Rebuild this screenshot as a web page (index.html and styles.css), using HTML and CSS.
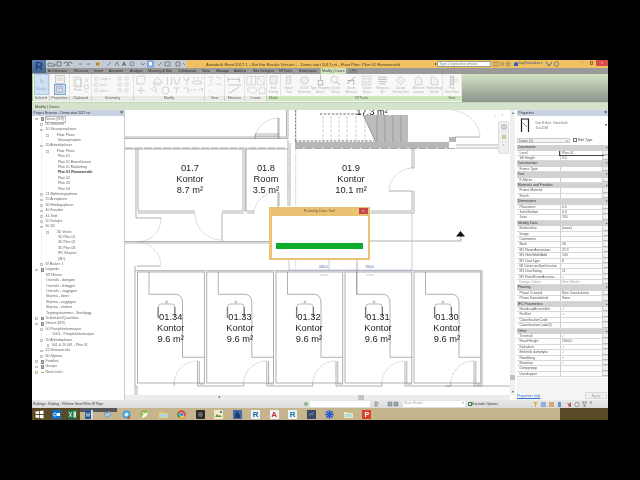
FILE: index.html
```html
<!DOCTYPE html>
<html lang="en">
<head>
<meta charset="utf-8">
<title>Autodesk Revit 2017.1</title>
<link rel="stylesheet" href="styles.css">
</head>
<body>
<div class="screen">
  <header class="titlebar">
    <div class="qat">
      <div class="rlogo">R<span class="rcaret"></span></div>
      <svg class="qat-icons" viewBox="46 60 140 8"><g fill="none" stroke="#666" stroke-width=".8"><path d="M48 63h3l1 1h3v2h-7z"/><rect x="57" y="62" width="4" height="4"/><path d="M64 64a2 2 0 1 1 2 2M72 64a2 2 0 1 0-2 2"/><path d="M79 64h3M87 64h3"/></g><rect x="96" y="62.5" width="3.5" height="3" fill="#b58a1c"/><g fill="none" stroke="#666" stroke-width=".7"><path d="M107 66l4-4M115 66l2-4 2 4"/></g><text x="122" y="66.4" class="qat-a">A</text><g fill="none" stroke="#667" stroke-width=".7"><circle cx="132" cy="64" r="2"/><path d="M141 63l2 2 2-2"/></g><rect x="147" y="60.5" width="7" height="7" fill="#7ca6dc"/><path d="M149 62h3v3.500h-3z" fill="#fff"/><g fill="none" stroke="#666" stroke-width=".7"><path d="M158 66l4-4M165 62h5v4h-5zM176 62h4v4h-4zM183 63l2 2"/></g></svg>
    </div>
    <div class="title">
      <span class="title-text">Autodesk Revit 2017.1 - Not For Resale Version - &nbsp; Demo start 2017.rvt - Floor Plan: Plan 01 Romoversikt</span>
      <div class="search"><span class="search-dot"></span><span class="search-box">Type a keyword or phrase</span></div>
      <svg class="help-icons" viewBox="0 0 18 6"><g fill="none" stroke="#666" stroke-width=".6"><rect x="1" y="1" width="4" height="4"/><circle cx="9" cy="3" r="1.600"/><path d="M15 .8l.8 1.500 1.500.2-1.100 1 .3 1.500-1.500-.7-1.400.7.300-1.500-1.100-1 1.500-.2z"/></g></svg>
      <span class="user"><span class="user-dot"></span>hap@nticad.no ▾</span>
      <svg class="help-icons2" viewBox="0 0 16 6"><path d="M1 1l3 4 3-4" fill="none" stroke="#2f5fa8" stroke-width=".9"/><circle cx="11.500" cy="3" r="2.200" fill="none" stroke="#456" stroke-width=".6"/></svg>
      <div class="winbtns"><span class="wb">–</span><span class="wb wb-max"></span><span class="wb-close">×</span></div>
    </div>
  </header>

  <nav class="tabs">
    <span class="tab t1">Architecture</span><span class="tab t2">Structure</span><span class="tab t3">Insert</span><span class="tab t4">Annotate</span><span class="tab t5">Analyze</span><span class="tab t6">Massing &amp; Site</span><span class="tab t7">Collaborate</span><span class="tab t8">View</span><span class="tab t9">Manage</span><span class="tab t10">Add-Ins</span><span class="tab t11">Site Designer</span><span class="tab t12">NTTools</span><span class="tab t13">Extensions</span><span class="tab-active">Modify | Doors</span><span class="tab-arrow">▾ ▪</span>
  </nav>

  <section class="ribbon">
    <div class="panel p-select"><div class="pbody"><div class="modify-btn"><svg viewBox="0 0 10 10"><path d="M3.500 1l4 4.500H5.500l1.200 2.500-1 .5L4.500 6 3.500 7.200z" fill="#b9c7d9"/></svg><span>Modify</span></div></div><div class="plabel">Select ▾</div></div>
    <div class="panel p-props"><div class="pbody pcol">
      <svg class="propsvg" viewBox="0 0 12 9"><rect x="1.500" y=".5" width="9" height="8" fill="#f0f0f0" stroke="#bbb" stroke-width=".7"/><path d="M3 3h6M3 5h6" stroke="#ccc" stroke-width=".7"/></svg>
      <div class="prop-active"><svg viewBox="0 0 10 10"><rect x="2" y="2" width="6" height="6" fill="#dde" stroke="#999" stroke-width=".7"/><path d="M3.500 4h3" stroke="#999" stroke-width=".7"/></svg></div>
    </div><div class="plabel">Properties</div></div>
    <div class="panel p-clip"><div class="pbody"><svg class="ico" viewBox="0 0 22 22"><g fill="none" stroke="#c8c8c8" stroke-width=".8"><path d="M4 3h7v9H4zM6 5h6v8H6z"/><path d="M16 4l3 4M19 4l-3 4M15 11h4v4h-4zM15 17l4 2"/></g><text x="4" y="17" class="rb-t">Paste</text></svg></div><div class="plabel">Clipboard</div></div>
    <div class="panel p-geom"><div class="pbody"><svg class="ico" viewBox="0 0 42 22"><g fill="none" stroke="#cfcfcf" stroke-width=".8"><path d="M3 3h3v3H3zM3 9h3v3H3zM3 15h3v3H3z"/><path d="M27 3h3v3h-3zM34 3h3v3h-3zM27 9h3v3h-3zM34 9h3v3h-3zM27 15h3v3h-3zM34 15h3v3h-3z"/></g><text x="8" y="6" class="rb-t">Cope ▾</text><text x="8" y="12" class="rb-t">Cut ▾</text><text x="8" y="18" class="rb-t">Join ▾</text></svg></div><div class="plabel">Geometry</div></div>
    <div class="panel p-mod"><div class="pbody"><svg class="ico" viewBox="0 0 71 22"><g fill="none" stroke="#cbcbcb" stroke-width=".9"><path d="M3 2v8h8M5 2h6v6"/><path d="M19 9l5-6 5 6zM21 9v2h6"/><path d="M34 3v8M38 3v8M40 3l3 8M47 3l-3 8M50 3l3 4 3-4-3 8"/><path d="M60 4h2M64 4h2M68 4h2M60 10h8v-3h-8zM60 16h3M65 16h2M68 14l2 3M70 14l-2 3"/><path d="M7 13v7M3.500 16.500h7"/><path d="M17 14l6 5M19 13a4 4 0 0 1 4 4"/><circle cx="32" cy="16.500" r="3.500"/><path d="M40 14h6M43 14v5M50 14h5v5M57 16h2"/></g></svg></div><div class="plabel">Modify</div></div>
    <div class="panel p-view"><div class="pbody"><svg class="ico" viewBox="0 0 20 22"><g fill="none" stroke="#ccc" stroke-width=".8"><path d="M4 4a2 2 0 1 1 2 2v2M12 3h3M15 3l2 3"/><path d="M3 12l5-3M11 10h5v2M4 16l3 3"/></g></svg></div><div class="plabel">View</div></div>
    <div class="panel p-meas"><div class="pbody"><svg class="ico" viewBox="0 0 20 22"><g fill="none" stroke="#bbb" stroke-width=".9"><path d="M3 3v5M3 5h12M15 3v5M3 11h14"/><path d="M4 20l11-7"/></g></svg></div><div class="plabel">Measure</div></div>
    <div class="panel p-create"><div class="pbody"><svg class="ico" viewBox="0 0 22 22"><g fill="none" stroke="#cdcdcd" stroke-width=".8"><path d="M2 2h9v9H2zM6.500 2v9M13 2h7v9h-7zM13 2l7 9"/><path d="M3 14h8l2 3-4 3-6-2zM15 14h6v6h-6z"/></g></svg></div><div class="plabel">Create</div></div>
    <div class="panel p-mode"><div class="pbody"><div class="rb"><svg viewBox="0 0 10 10"><path d="M2 1h6v7H2z" fill="#eee" stroke="#c4c4c4" stroke-width=".7"/></svg><span>Edit<br>Family</span></div></div><div class="plabel plabel-green">Mode</div></div>
    <div class="panel p-nt"><div class="pbody">
      <div class="rb"><svg viewBox="0 0 10 10"><rect x="3" y="1" width="4" height="7" fill="#eee" stroke="#c8c8c8" stroke-width=".7"/></svg><span>Room<br>Tool</span></div>
      <div class="rb"><svg viewBox="0 0 10 10"><circle cx="5" cy="5" r="3.500" fill="#eee" stroke="#c8c8c8" stroke-width=".7"/></svg><span>S &amp; B<br>Elements</span></div>
      <div class="rb"><svg viewBox="0 0 10 10"><path d="M5 0v5M3 5h4v4H3z" fill="none" stroke="#c0c0c0" stroke-width="1"/></svg><span>Type Property<br>Match</span></div>
      <div class="rb"><svg viewBox="0 0 10 10"><circle cx="4" cy="4" r="3" fill="none" stroke="#c8c8c8" stroke-width=".8"/><path d="M6 6l3 3" stroke="#c8c8c8"/></svg><span>Quick<br>Select</span></div>
      <div class="rb"><svg viewBox="0 0 10 10"><path d="M1 8l7-6M1 5h6v4" fill="none" stroke="#b8b8b8" stroke-width="1"/></svg><span>Zoom<br>Element</span></div>
      <div class="rb"><svg viewBox="0 0 10 10"><rect x="1" y="1" width="8" height="8" fill="#f0f6fa" stroke="#c8d0d4" stroke-width=".7"/><rect x="3" y="3" width="4" height="4" fill="none" stroke="#c8d0d4" stroke-width=".6"/></svg><span>Create<br>Mass</span></div>
      <div class="rb"><svg viewBox="0 0 10 10"><path d="M1 2h8M1 4h8M1 6h8M2 8h6" stroke="#bdbdbd" stroke-width=".9"/></svg><span>Measure<br>3D</span></div>
      <div class="rb rb-w"><svg viewBox="0 0 10 10"><path d="M5 1l4 4-4 4-4-4z" fill="#f2f2f2" stroke="#c8c8c8" stroke-width=".7"/></svg><span>Create<br>Section box</span></div>
      <div class="rb"><svg viewBox="0 0 10 10"><path d="M2 4l3-3 3 3v5H2z" fill="#f2f2f2" stroke="#c8c8c8" stroke-width=".7"/></svg><span>Element<br>Lookup</span></div>
      <div class="rb"><svg viewBox="0 0 10 10"><path d="M2 9V2h3l3 3v4z" fill="#f2f2f2" stroke="#c8c8c8" stroke-width=".7"/></svg><span>Remaining<br>Sheet</span></div>
    </div><div class="plabel plabel-green">NTTools</div></div>
    <div class="panel p-host"><div class="pbody"><div class="rb"><svg viewBox="0 0 10 10"><path d="M3 1h3v8H3z" fill="#ddd" stroke="#bbb" stroke-width=".6"/><circle cx="8" cy="5" r="1.500" fill="none" stroke="#bbb" stroke-width=".5"/></svg><span>Pick<br>New Host</span></div></div><div class="plabel plabel-green">Host</div></div>
    <div class="ribbon-fill"></div>
  </section>

  <div class="options">Modify | Doors</div>

  <main class="main">
    <aside class="browser">
      <div class="panel-head"><span>Project Browser - Demo start 2017.rvt</span><span class="x">×</span></div>
      <ul class="tree">
        <li class="l0 open"><i class="exp"></i><i class="ticon"></i><b class="sel">Views (NTI)</b></li>
        <li class="l1"><i class="exp"></i>00 Generelt</li>
        <li class="l1"><i class="exp"></i>10 Situasjonsplaner</li>
        <li class="l2"><i class="exp"></i>Floor Plans</li>
        <li class="l3">Situasjonsplan</li>
        <li class="l1"><i class="exp"></i>20 Arbeidsplaner</li>
        <li class="l2"><i class="exp"></i>Floor Plans</li>
        <li class="l3">Plan 01</li>
        <li class="l3">Plan 01 Brannklasser</li>
        <li class="l3">Plan 01 Målsetting</li>
        <li class="l3 cur">Plan 01 Romoversikt</li>
        <li class="l3">Plan 02</li>
        <li class="l3">Plan 03</li>
        <li class="l3">Plan 04</li>
        <li class="l1"><i class="exp"></i>21 Møbleringsplaner</li>
        <li class="l1"><i class="exp"></i>25 Areaplaner</li>
        <li class="l1"><i class="exp"></i>30 Himlingsplaner</li>
        <li class="l1"><i class="exp"></i>40 Fasader</li>
        <li class="l1"><i class="exp"></i>41 Snitt</li>
        <li class="l1"><i class="exp"></i>50 Detaljer</li>
        <li class="l1"><i class="exp"></i>60 3D</li>
        <li class="l2"><i class="exp"></i>3D Views</li>
        <li class="l3">3D Plan 01</li>
        <li class="l3">3D Plan 02</li>
        <li class="l3">3D Plan 03</li>
        <li class="l3">IFC Eksport</li>
        <li class="l3">{3D}</li>
        <li class="l1"><i class="exp"></i>W Bruker 1</li>
        <li class="l0"><i class="exp"></i><i class="ticon"></i>Legends</li>
        <li class="l1b">NTI Enere</li>
        <li class="l1b">Oversikt - dørtyper</li>
        <li class="l1b">Oversikt - lettvgger</li>
        <li class="l1b">Oversikt - veggtyper</li>
        <li class="l1b">Skjema - dører</li>
        <li class="l1b">Skjema - veggtyper</li>
        <li class="l1b">Skjema - vinduer</li>
        <li class="l1b">Tegningsnummer - Statsbygg</li>
        <li class="l0"><i class="exp"></i><i class="ticon"></i>Schedules/Quantities</li>
        <li class="l0"><i class="exp"></i><i class="ticon"></i>Sheets (NTI)</li>
        <li class="l1"><i class="exp"></i>00 Prosjektinformasjon</li>
        <li class="l2b">0001 - Prosjektinformasjon</li>
        <li class="l1"><i class="exp"></i>20 Arbeidsplaner</li>
        <li class="l2c"><i class="exp"></i>001 &amp; 20 001 - Plan 01</li>
        <li class="l1"><i class="exp"></i>22 Romoversikt</li>
        <li class="l1"><i class="exp"></i>60 Skjema</li>
        <li class="l0"><i class="exp"></i><i class="ticon"></i>Families</li>
        <li class="l0"><i class="exp"></i><i class="ticon"></i>Groups</li>
        <li class="l0"><i class="exp"></i><i class="ticon ticon-link"></i>Revit Links</li>
      </ul>
    </aside>

    <section class="canvas">
      <svg class="plan" viewBox="125 110 385 285">
        <defs>
          <g id="room">
            <rect x="0" y="272" width="66.800" height="111" class="w"/>
            <path d="M11.500 272V294.300H37.500Q45 294.300 45 303V357.300H66.800" class="w"/>
            <path d="M36.800 386V383M60 361V386H106M61.800 361V384H67" class="w"/>
            <path d="M36.800 383A23 23 0 0 1 60 361" class="arc"/>
            <path d="M21 318V306Q21 304 24 304H34Q37 304 37 306V318" class="t"/>
            <path d="M20.500 307V318M37.500 307V316" class="w2"/>
            <circle cx="29" cy="302" r="1" class="t"/>
          </g>
        </defs>
        <g class="walls">
          <path d="M125 138.500H288V110M125 137H286.500V110" class="w"/>
          <path d="M125 148H286" class="wd"/>
          <path d="M125 149H243" class="w"/>
          <path d="M136 149V218H137M138 149V211H195M243 149V211H222M245 149V212M222 213H244M195 213H138M222 213V241" class="w"/>
          <path d="M246 149H288M288 140V206M290 143V206M246 149V211H254M254 213H247M278 192V212M279 192V206" class="w"/>
          <path d="M255 139V134H279V139M255 136H279" class="w"/>
          <path d="M278 118V139M279 118V134" class="w"/>
          <path d="M295.700 110V143" class="blackd"/>
          <path d="M295.700 143V270" class="gd"/>
          <path d="M125 241.500H270M125 243H270" class="w"/>
          <path d="M137 218H161M137 266H161M135 395V266M137 395V386H135" class="w"/>
          <path d="M254 213A24 22 0 0 1 278 192M195 213A27 27 0 0 0 221 240M161 218A24 24 0 0 1 138 242A24 24 0 0 1 161 265M255 139A24 22 0 0 1 278 118M412 168A24 24 0 0 0 389 191M452 110A33 28 0 0 1 480 136" class="arc"/>
          <path d="M295 142H456V137H449V148H295Z" class="band"/>
          <path d="M295 148.500H456" class="wd"/>
          <path d="M455 137H480M456 145H503V148H456" class="w"/>
          <path d="M503 148V145" class="w"/>
          <path d="M363 115H408V142H375Z" class="stair"/>
          <path d="M377 115V142M385 115V142M393 115V142M401 115V142M363 115L376 142" class="w"/>
          <path d="M320 114H364M295 141H374" class="blackd2"/>
          <path d="M323 116V141M331 116V141M339 116V141M347 116V141M356 116V141M365 116V141" class="gd2"/>
          <path d="M412 148V168H414V148M412 191V211H371M414 191V213H370M389 191H412" class="w"/>
          <path d="M370 241H461V236" class="w"/>
          <path d="M456 236.500H465L460.500 231Z" class="tri"/>
          <path d="M135 270.700H482V386H445" class="w"/>
          <path d="M289 255V271M412 213V271M329 260V270M289 270H412" class="dim"/>
          <path d="M357 255V295" class="w"/>
          <path d="M320 275H328M366 275H374" class="dim"/>
        </g>
        <use href="#room" x="137.500"/><use href="#room" x="206.800"/><use href="#room" x="276"/><use href="#room" x="345"/><use href="#room" x="414"/>
        <g class="plan-sm"><text x="319" y="268.200">2460.0</text><text x="365.500" y="268.200">2950.0</text></g>
        <g class="lab">
          <text x="372" y="115">17.3 m²</text>
          <text x="190" y="171">01.7</text><text x="190" y="182">Kontor</text><text x="190" y="192.500">8.7 m²</text>
          <text x="266" y="171">01.8</text><text x="266" y="182">Room</text><text x="266" y="192.500">3.5 m²</text>
          <text x="351" y="171">01.9</text><text x="351" y="182">Kontor</text><text x="351" y="192.500">10.1 m²</text>
          <text x="170.700" y="320">01.34</text><text x="170.700" y="331">Kontor</text><text x="170.700" y="342">9.6 m²</text>
          <text x="240" y="320">01.33</text><text x="240" y="331">Kontor</text><text x="240" y="342">9.6 m²</text>
          <text x="309" y="320">01.32</text><text x="309" y="331">Kontor</text><text x="309" y="342">9.6 m²</text>
          <text x="378" y="320">01.31</text><text x="378" y="331">Kontor</text><text x="378" y="342">9.6 m²</text>
          <text x="447" y="320">01.30</text><text x="447" y="331">Kontor</text><text x="447" y="342">9.6 m²</text>
        </g>
      </svg>

      <div class="dialog">
        <div class="dlg-title"><span>Running Door Tool</span><span class="dlg-close">×</span></div>
        <div class="dlg-body"><div class="progress"></div></div>
      </div>

      <div class="view-ctrl"><span>–</span><span>▫</span><span>×</span></div>
      <div class="navbar"><span class="nav-wheel"></span><span class="nav-zoom"></span><span class="nav-arrow">▾</span></div>

      <div class="vscroll"><span class="arr">▴</span><span class="thumb-v"></span><span class="arr">▾</span></div>
      <div class="hscroll"><span class="arr">◂</span><span class="thumb-h"></span></div>
    </section>

    <aside class="props">
      <div class="panel-head"><span>Properties</span><span class="x">×</span></div>
      <div class="typeprev">
        <svg class="door" viewBox="0 0 12 15"><path d="M1.500 14V1h7v13" fill="#fff" stroke="#222" stroke-width="1.200"/><path d="M3 5l4 4" stroke="#555" stroke-width=".7"/></svg>
        <div class="typename">Dør Enkel, Glasshelt<br>10x21M</div>
        <span class="typearrow">▾</span>
      </div>
      <div class="selrow"><span class="seldrop">Doors (1)<span>▾</span></span><span class="edittype"><i></i>Edit Type</span></div>
      <div class="ptable">
        <div class="ph">Constraints<span>▴</span></div>
        <div class="pr"><span>Level</span><span class="box">Plan 01</span><i></i></div>
        <div class="pr"><span>Sill Height</span><span>0.0</span><i></i></div>
        <div class="ph">Construction<span>▾</span></div>
        <div class="pr"><span>Frame Type</span><span></span><i></i></div>
        <div class="ph">Text<span>▾</span></div>
        <div class="pr"><span>K-Merke</span><span></span><i></i></div>
        <div class="ph">Materials and Finishes<span>▴</span></div>
        <div class="pr"><span>Frame Material</span><span></span><i></i></div>
        <div class="pr"><span>Finish</span><span></span><i></i></div>
        <div class="ph">Dimensions<span>▾</span></div>
        <div class="pr"><span>Plassment</span><span>0.0</span><i></i></div>
        <div class="pr"><span>Joint Bottom</span><span>0.0</span><i></i></div>
        <div class="pr"><span>Joint</span><span>150</span><i></i></div>
        <div class="ph">Identity Data<span>▴</span></div>
        <div class="pr"><span>Beskrivelse</span><span>(none)</span><i></i></div>
        <div class="pr"><span>Image</span><span></span><i></i></div>
        <div class="pr"><span>Comments</span><span></span><i></i></div>
        <div class="pr"><span>Mark</span><span>56</span><i></i></div>
        <div class="pr"><span>M1 RoomAnnotation</span><span>25.9</span><i></i></div>
        <div class="pr"><span>M1 HoleWidthAdd</span><span>100</span><i></i></div>
        <div class="pr"><span>M1 DoorType</span><span>8</span><i></i></div>
        <div class="pr pr-long"><span>M1 DimensionDoorDirection</span><span></span><i></i></div>
        <div class="pr"><span>M1 DoorSwing</span><span>11</span><i></i></div>
        <div class="pr"><span>M1 FromRoomAssocia...</span><span class="ck">✓</span><i></i></div>
        <div class="pr pr-off"><span>Design Option</span><span>Main Model</span><i></i></div>
        <div class="ph">Phasing<span>▾</span></div>
        <div class="pr"><span>Phase Created</span><span>New Construction</span><i></i></div>
        <div class="pr"><span>Phase Demolished</span><span>None</span><i></i></div>
        <div class="ph">IFC Parameters<span>▴</span></div>
        <div class="pr"><span>HandicapAccessible</span><span class="ck">✓</span><i></i></div>
        <div class="pr"><span>FireExit</span><span class="ck">✓</span><i></i></div>
        <div class="pr"><span>ClassificationCode</span><span></span><i></i></div>
        <div class="pr"><span>ClassificationCode(2)</span><span></span><i></i></div>
        <div class="ph">Other<span>▴</span></div>
        <div class="pr"><span>Tresmalt</span><span class="ck">✓</span><i></i></div>
        <div class="pr"><span>Head Height</span><span>2060.0</span><i></i></div>
        <div class="pr"><span>Kvikalarm</span><span class="ck">✓</span><i></i></div>
        <div class="pr"><span>Elektrisk dørtyttyke</span><span class="ck">✓</span><i></i></div>
        <div class="pr"><span>Rømilding</span><span class="ck">✓</span><i></i></div>
        <div class="pr"><span>Brosetup</span><span class="ck">✓</span><i></i></div>
        <div class="pr"><span>Dørtypnopp</span><span></span><i></i></div>
        <div class="pr"><span>Dørskopper</span><span></span><i></i></div>
      </div>
      <div class="propfoot"><a class="helplink">Properties help</a><span class="apply">Apply</span></div>
    </aside>
  </main>

  <footer class="status">
    <span class="st-text">Railings : Railing : 900mm Steel Wire W Pipe</span>
    <svg class="st-ico" viewBox="0 0 6 6"><circle cx="3" cy="3" r="2" fill="#8ab08a"/></svg>
    <span class="st-input"></span>
    <svg class="st-ico2" viewBox="0 0 24 6"><g fill="none" stroke="#667" stroke-width=".7"><path d="M1 1h2v4H1zM4 2h1"/></g><path d="M7 3h.01" stroke="#667"/><g fill="#9aa" stroke="#667" stroke-width=".4"><rect x="14" y="1" width="4" height="4"/><rect x="20" y="1" width="4" height="4"/></g></svg>
    <span class="st-model">Main Model<i>▾</i></span>
    <span class="st-check"><i>✓</i>Exclude Options</span>
    <svg class="st-ico3" viewBox="0 0 58 6"><path d="M1 1h5L4 3v3H3V3z" fill="#d9b23a"/><rect x="9" y="1" width="5" height="5" fill="#8fb0d8"/><rect x="17" y="1" width="5" height="5" fill="#d8a878"/><path d="M26 1v5h3V1z" fill="#6f95c8"/><path d="M35 1l2 2 2-2v5h-2z" fill="#b85a5a"/><circle cx="45" cy="3.500" r="2.200" fill="none" stroke="#888" stroke-width=".8"/><path d="M50 1h5l-2 2v3h-1V3z" fill="none" stroke="#667" stroke-width=".6"/></svg>
    <span class="st-zero">:0</span>
  </footer>

  <div class="taskbar">
    <div class="tb-item tb-start"><svg viewBox="0 0 9 9"><path d="M.5 1.500L4 1v3H.5zM4.800.9L8.500.400V4H4.800zM.5 5H4v3L.5 7.500zM4.800 5h3.700v3.600L4.800 8.100z" fill="#fff"/></svg></div>
    <div class="tb-item tb-dark"><svg viewBox="0 0 9 9"><rect width="9" height="9" fill="#0f6fc6"/><circle cx="3" cy="4.500" r="1.600" fill="none" stroke="#fff" stroke-width=".8"/><rect x="5" y="3" width="3" height="3" fill="#fff"/></svg></div>
    <div class="tb-item tb-dark"><svg viewBox="0 0 9 9"><rect width="9" height="9" fill="#217346"/><path d="M1 2l3 5M4 2L1 7" stroke="#fff" stroke-width=".8"/><path d="M5.500 1.500h2.500v6H5.500z" fill="#cfe8d6"/></svg></div>
    <div class="tb-item tb-word"><svg viewBox="0 0 9 9"><rect x="1" y="0" width="7" height="9" fill="#cfdcf0"/><rect width="6" height="9" fill="#2b579a"/><path d="M1 2.500l1 4 1-3 1 3 1-4" fill="none" stroke="#fff" stroke-width=".5"/></svg></div>
    <div class="tb-item tb-word"><svg viewBox="0 0 9 9"><path d="M1 3l6-2 1 5-6 2z" fill="#6d9cba"/><path d="M2 4l5-1.500v3L2 7z" fill="#a8cbe0"/></svg></div>
    <div class="tb-item"><svg viewBox="0 0 9 9"><circle cx="4.500" cy="4.500" r="4" fill="#39a7dc"/><circle cx="4.500" cy="4.500" r="2" fill="#d7eef9"/><rect x="5.500" y="6.500" width="2.500" height="2" fill="#d93a3a"/></svg></div>
    <div class="tb-item"><svg viewBox="0 0 9 9"><path d="M1 8C1 3 4 1 8 1 8 6 5 8 1 8z" fill="#f2f8e4"/><path d="M1 8C2 4 5 2 8 1" stroke="#7cb927" fill="none"/><path d="M2 6a3 3 0 1 1 5-3" fill="none" stroke="#6aa81e"/></svg></div>
    <div class="tb-item"><svg viewBox="0 0 9 9"><path d="M0 2h3l1 1h5v5H0z" fill="#e8cd6f"/><path d="M1 4h7v3H1z" fill="#a9d5ee"/></svg></div>
    <div class="tb-item"><svg viewBox="0 0 9 9"><circle cx="4.500" cy="4.500" r="4.200" fill="#e2463a"/><path d="M4.500 4.500L8 6.500A4.200 4.200 0 0 1 2 8z" fill="#f6c12a"/><path d="M4.500 4.500L2 8A4.200 4.200 0 0 1 .8 2.500z" fill="#3aa653"/><circle cx="4.500" cy="4.500" r="1.900" fill="#3a7fe0" stroke="#fff" stroke-width=".5"/></svg></div>
    <div class="tb-item"><svg viewBox="0 0 9 9"><rect width="9" height="9" rx="1" fill="#2b2b2b"/><circle cx="4.500" cy="4.500" r="2.500" fill="#666"/></svg></div>
    <div class="tb-item"><svg viewBox="0 0 9 9"><rect width="9" height="9" fill="#f3e9c9"/><path d="M1 7l2-3 2 2 1-1 2 2z" fill="#5a9a4a"/><rect x="6" y="1" width="2" height="2" fill="#3f7fc8"/></svg></div>
    <div class="tb-item"><svg viewBox="0 0 9 9"><rect width="9" height="9" fill="#3f6cb0"/><path d="M4 1l3 4v3H2V4z" fill="#1d3c73"/></svg></div>
    <div class="tb-item"><span class="tb-r">R</span></div>
    <div class="tb-item"><span class="tb-r tb-red">A</span></div>
    <div class="tb-item"><span class="tb-r tb-teal">R</span></div>
    <div class="tb-item"><svg viewBox="0 0 9 9"><rect width="9" height="9" fill="#3b4a66"/><path d="M2 6l2-3 1 2 2-3" stroke="#9ab" fill="none" stroke-width=".6"/></svg></div>
    <div class="tb-item"><svg viewBox="0 0 9 9"><path d="M4.500 0v9M0 4.500h9M1.300 1.300l6.400 6.400M7.700 1.300L1.300 7.700" stroke="#2a5bd0" stroke-width="1.500"/></svg></div>
    <div class="tb-item"><svg viewBox="0 0 9 9"><path d="M0 2h3l1 1h5v5H0z" fill="#f0e6a8"/><path d="M1 4h7v3H1z" fill="#a9dbe8"/></svg></div>
    <div class="tb-item"><span class="tb-p">P</span></div>
    <div class="tb-fill"></div>
    <div class="tb-tray"></div>
  </div>
</div>
</body>
</html>
```

FILE: styles.css
```css
* { box-sizing: border-box; }
html, body { margin: 0; padding: 0; background: #000; overflow: hidden; height: 100%; }
body { font-family: "Liberation Sans", Arial, sans-serif; }
.screen {
  width: 576px; height: 360px; margin: 60px 0 0 32px; display: flex; flex-direction: column;
  background: #eee; overflow: hidden; filter: blur(.45px); font-size: 3.6px; line-height: 1.2; color: #333;
}
i { font-style: normal; }

/* title */
.titlebar { height: 8px; display: flex; flex: none; }
.qat { width: 154px; background: #c3cbd6; display: flex; flex: none; position: relative; }
.rlogo { width: 14px; height: 13px; background: linear-gradient(#5c7ea8, #46648c); color: #1d3f78; font-weight: bold; font-size: 11px; line-height: 13px; text-align: center; z-index: 2; }
.rcaret { display: inline-block; }
.qat-icons { width: 140px; height: 8px; }
.qat-a { font: bold 5.500px "Liberation Sans", sans-serif; fill: #444; }
.title { flex: 1; background: #f0c161; display: flex; align-items: center; position: relative; }
.title-text { margin-left: 20px; width: 228.500px; font-size: 4.170px; color: #4a3a1c; white-space: nowrap; flex: none; }
.search { display: flex; align-items: center; margin-left: 0; flex: none; }
.search-dot { width: 1.500px; height: 1.500px; background: #444; margin-right: 1px; }
.search-box { width: 54px; height: 5.500px; background: #fff; font-size: 3.3px; line-height: 5.500px; padding-left: 1.500px; color: #777; border: .3px solid #999; white-space: nowrap; }
.help-icons { width: 18px; height: 6px; margin-left: 2px; flex: none; }
.user { color: #2d4b7a; font-size: 3.200px; width: 34px; margin-left: 0; display: flex; align-items: center; white-space: nowrap; flex: none; }
.user-dot { width: 3.500px; height: 4.500px; background: #2e62ba; margin: 0 1px 0 3px; border-radius: 2px 2px 0 0; flex: none; }
.help-icons2 { width: 16px; height: 6px; flex: none; }
.winbtns { position: absolute; right: 0; top: 0; height: 5.500px; display: flex; align-items: center; }
.wb { width: 8px; text-align: center; color: #555; font-size: 4px; }
.wb-max { display: block; width: 3px; height: 3.500px; background: #e8a06a; border: .5px solid #b5653a; margin: 0 3.500px 0 3px; }
.wb-close { width: 12px; height: 5.500px; background: #d64d49; color: #fff; text-align: center; font-size: 4px; line-height: 5.500px; }

/* tabs */
.tabs { height: 6px; flex: none; background: #9a9a9a; display: flex; align-items: center; position: relative; white-space: nowrap; color: #2c2c2c; }
.tab { font-size: 3.600px; flex: none; }
.t1 { margin-left: 16px; width: 26px; }
.t2 { width: 20px; } .t3 { width: 15px; } .t4 { width: 21px; } .t5 { width: 18px; } .t6 { width: 30px; } .t7 { width: 24px; } .t8 { width: 14px; } .t9 { width: 18px; } .t10 { width: 19px; } .t11 { width: 26px; } .t12 { width: 20px; } .t13 { width: 20.500px; }
.tab-active { flex: none; width: 26px; height: 6px; background: #cfe2bd; line-height: 6px; padding-left: 1.500px; color: #445; font-size: 3.500px; border-left: 1px solid #8cc96b; }
.tab-arrow { margin-left: 3px; font-size: 3px; color: #444; background: #8a8a8a; padding: 0 3px; }

/* ribbon */
.ribbon { height: 28px; flex: none; display: flex; background: #f2f5ef; }
.panel { flex: none; display: flex; flex-direction: column; background: #f8f9f7; height: 27px; }
.pbody { height: 22px; display: flex; justify-content: center; border-right: .5px solid #e2e2e2; }
.pcol { flex-direction: column; align-items: center; justify-content: flex-start; }
.plabel { height: 5px; line-height: 5px; background: #e9ebe6; text-align: center; color: #666; font-size: 3.500px; border-right: .5px solid #cfcfcf; }
.plabel-green { background: #cfe7bb; border-right-color: #cfe7bb; }
.p-select { width: 18px; border-left: 1px solid #8fd06a; }
.p-props { width: 20px; }
.p-clip { width: 22px; }
.p-geom { width: 42px; }
.p-mod { width: 71px; }
.p-view { width: 20px; }
.p-meas { width: 20px; }
.p-create { width: 22px; }
.p-mode { width: 14px; }
.p-nt { width: 162px; }
.p-host { width: 19px; }
.ico { width: 100%; height: 22px; display: block; }
.rb-t { font: 3.400px "Liberation Sans", sans-serif; fill: #b4b4b4; }
.modify-btn { width: 15px; height: 21px; margin: 0 auto; background: #cfe1f4; border: .5px solid #a9c8ea; display: flex; flex-direction: column; align-items: center; color: #9db1c8; font-size: 3.400px; }
.modify-btn svg { width: 9px; height: 12px; }
.propsvg { width: 12px; height: 9px; margin-top: 1px; }
.prop-active { width: 12px; height: 11px; background: #c3dcf2; border: .5px solid #7ea8d0; display: flex; align-items: center; justify-content: center; }
.prop-active svg { width: 9px; height: 9px; }
.p-nt .pbody { justify-content: space-between; padding: 0 0 0 0; }
.rb { flex: 1; min-width: 0; display: flex; flex-direction: column; align-items: center; text-align: center; font-size: 3.200px; color: #b2b2b2; line-height: 3.800px; padding-top: 1px; white-space: nowrap; }
.rb svg { width: 11px; height: 11px; margin-bottom: 1px; flex: none; }
.rb-w { flex: 1.300; }
.ribbon-fill { flex: 1; background: linear-gradient(#d2e3c6, #8d948c); height: 27.500px; }
.options { height: 8px; flex: none; background: #d6e3cc; padding-left: 3px; line-height: 8px; font-size: 3.800px; color: #444; border-top: .5px solid #c6d4bc; }

/* main */
.main { height: 290px; flex: none; display: flex; background: #c9c9c9; }
.browser { width: 92px; flex: none; background: #fff; margin-right: 1px; }
.panel-head { height: 5.500px; background: #c8d4e4; display: flex; justify-content: space-between; align-items: center; padding: 0 1px 0 1.500px; font-size: 3.400px; color: #333; font-weight: bold; white-space: nowrap; }
.panel-head span:first-child { font-weight: normal; }
.panel-head .x { font-size: 4.500px; color: #223; line-height: 4px; }
.tree {
  list-style: none; margin: 1px 0 0; padding: 0; font-size: 3.500px; color: #666;
  background: linear-gradient(#dedede, #dedede) 9.200px 0 / .4px 230px no-repeat;
}
.tree li { height: 5.400px; line-height: 5.400px; display: flex; align-items: center; white-space: nowrap; background: transparent; }
.tree b { font-weight: normal; }
.exp { display: block; width: 2.600px; height: 2.600px; border: .4px solid #c4c4c4; background: #fafafa; flex: none; margin-right: 2.800px; }
.ticon { display: block; width: 3.600px; height: 3.600px; background: #c2c2c2; border: .4px solid #8c8c8c; margin-right: 1.400px; flex: none; }
.ticon-link { background: #d2a62a; height: 1.800px; border: none; }
.sel { outline: .3px solid #bbb; padding: 0 .5px; }
.l0 { padding-left: 3.200px; }
.l1 { padding-left: 8.200px; }
.l2 { padding-left: 14.200px; }
.l3 { padding-left: 26px; }
.l1b { padding-left: 14px; }
.l2b { padding-left: 20.500px; }
.l2c { padding-left: 14.500px; }
li.l2 > .exp { margin-right: 8px; }
.cur { font-weight: bold; color: #333; }

/* canvas */
.canvas { flex: 1; position: relative; background: #fff; min-width: 0; }
.plan { position: absolute; left: 0; top: 0; width: 385px; height: 285px; display: block; }
.w { fill: none; stroke: #8f8f8f; stroke-width: .7; }
.w2 { fill: none; stroke: #777; stroke-width: 1.100; }
.wd { fill: none; stroke: #aaa; stroke-width: 1; stroke-dasharray: 8 1.500; }
.gd { fill: none; stroke: #c6c6c6; stroke-width: .6; stroke-dasharray: 9 1.500; }
.gd2 { fill: none; stroke: #999; stroke-width: .5; stroke-dasharray: 3 1.500; }
.blackd { fill: none; stroke: #333; stroke-width: .7; stroke-dasharray: 2.500 1; }
.blackd2 { fill: none; stroke: #444; stroke-width: .8; stroke-dasharray: 2.400 1.500; }
.band { fill: #b6b6b6; stroke: none; }
.stair { fill: #bcbcbc; stroke: none; }
.arc { fill: none; stroke: #8e8e8e; stroke-width: .55; stroke-dasharray: .9 .7; }
.t { fill: none; stroke: #8c8c8c; stroke-width: .6; }
.tri { fill: #111; }
.dim { fill: none; stroke: #9da8d8; stroke-width: .6; }
.lab text { font-size: 9.300px; text-anchor: middle; fill: #222; }
.plan-sm text { font-size: 2.800px; fill: #4a5fb0; }

.dialog { position: absolute; left: 144px; top: 97px; width: 101px; height: 53px; background: #e9c274; padding: 0 2.500px 2.500px; }
.dlg-title { height: 9px; position: relative; text-align: center; line-height: 9px; font-size: 3.800px; color: #6b5a32; }
.dlg-close { position: absolute; right: -.500px; top: 1px; width: 9px; height: 6px; background: #c8484a; color: #fff; line-height: 6px; font-size: 4px; }
.dlg-body { height: 41.500px; background: #fff; padding: 27px 4.500px 0; }
.progress { height: 6px; background: #0cad2c; }

.view-ctrl { position: absolute; left: 369px; top: 3px; display: flex; gap: 2px; color: #888; font-size: 3.500px; }
.navbar { position: absolute; left: 373px; top: 11px; width: 11px; height: 33px; background: #efefef; border: .4px solid #ddd; border-radius: 1.500px; display: flex; flex-direction: column; align-items: center; padding-top: 2px; gap: 5px; }
.nav-wheel { width: 6px; height: 6px; border-radius: 3px; background: #cfd9e4; border: .4px solid #b0b8c0; }
.nav-zoom { width: 4px; height: 4px; background: #bcd0a8; }
.nav-arrow { font-size: 3px; color: #999; }
.vscroll { position: absolute; left: 385px; top: 0; width: 5px; height: 285px; background: #efefef; display: flex; flex-direction: column; align-items: center; color: #666; font-size: 3.500px; justify-content: space-between; padding: 1px 0; }
.thumb-v { width: 4.500px; height: 5px; background: #c0c0c0; margin-top: 250px; }
.vscroll .arr { line-height: 4px; }
.hscroll { position: absolute; left: 0; top: 285px; width: 385px; height: 5px; background: #ededed; display: flex; align-items: center; color: #555; font-size: 3.500px; padding-left: 93px; }
.thumb-h { width: 5.500px; height: 5px; background: #c4c4c4; margin-left: 138px; }

/* properties */
.props { width: 91px; flex: none; background: #f4f4f4; display: flex; flex-direction: column; }
.typeprev { height: 20px; background: #fff; display: flex; align-items: center; position: relative; }
.door { width: 12px; height: 15px; margin-left: 3px; flex: none; }
.typename { margin-left: 3.500px; color: #777; font-size: 3.500px; line-height: 4.300px; margin-top: 0; }
.typearrow { position: absolute; right: 1.500px; top: 7px; font-size: 3.500px; color: #333; }
.selrow { height: 9.800px; display: flex; align-items: center; padding: 1px 1px 1px 0; background: #fdfdfd; color: #555; }
.seldrop { width: 53px; height: 5.500px; border: .3px solid #ccc; background: #f3f3f3; display: flex; justify-content: space-between; padding: 0 1px; line-height: 5px; font-size: 3.400px; }
.edittype { margin-left: 3px; display: flex; align-items: center; font-size: 3.500px; }
.edittype i { display: block; width: 4px; height: 4px; border: .5px solid #777; margin-right: 1px; }
.ptable { height: 232.400px; background: #fff; overflow: hidden; }
.ph { height: 5.400px; line-height: 5.400px; background: #d2d2d2; color: #333; padding-left: .8px; position: relative; font-size: 3.500px; white-space: nowrap; }
.ph span { position: absolute; right: .5px; top: 0; color: #444; font-size: 3px; }
.pr { height: 5.400px; display: grid; grid-template-columns: 43px 43px 5px; line-height: 5.100px; border-bottom: .4px solid #d8d8d8; color: #555; font-size: 3.400px; white-space: nowrap; }
.pr span { padding-left: 2.500px; overflow: hidden; }
.pr span + span { padding-left: 1px; border-left: .4px solid #cfcfcf; border-right: .4px solid #cfcfcf; }
.pr i { background: #f0f0f0; border-bottom: .4px solid #bbb; }
.pr .box { outline: .5px solid #444; outline-offset: -.5px; }
.pr-off { color: #a4a4a4; }
.pr-long { font-size: 3px; }
.ck { font-size: 3.300px; color: #555; }
.propfoot { flex: 1; display: flex; align-items: flex-end; justify-content: space-between; padding: 0 1px 1px 0; background: #f4f4f4; }
.helplink { color: #3470c8; font-size: 3.500px; text-decoration: underline; margin-bottom: 1px; }
.apply { width: 22px; height: 7px; background: #f0f0f0; border: .4px solid #d8d8d8; text-align: center; line-height: 6.500px; color: #aaa; font-size: 3.600px; }

/* status */
.status { height: 8px; flex: none; background: linear-gradient(#e8e8e8, #dcdcdc); display: flex; align-items: center; color: #3c3c3c; white-space: nowrap; }
.st-text { width: 271px; padding-left: 1px; font-size: 3.500px; flex: none; }
.st-ico { width: 6px; height: 6px; flex: none; }
.st-input { width: 60px; height: 5.500px; background: #fff; margin-left: 1px; flex: none; }
.st-ico2 { width: 30px; height: 6px; margin-left: 1px; flex: none; }
.st-model { width: 62px; height: 5.500px; background: #fff; color: #aaa; margin-left: 2px; font-size: 3.600px; line-height: 5.500px; padding: 0 1px; display: flex; justify-content: space-between; flex: none; }
.st-check { margin-left: 2.500px; display: flex; align-items: center; font-size: 3.600px; width: 64px; flex: none; }
.st-check i { display: block; width: 4px; height: 4px; border: .4px solid #4a7f4a; background: #fff; color: #2b7a2b; font-size: 3px; line-height: 3px; margin-right: .5px; }
.st-ico3 { width: 58px; height: 6px; flex: none; }
.st-zero { font-size: 3px; }

/* taskbar */
.taskbar { height: 12px; flex: none; display: flex; align-items: center; background: #c5b48c; }
.tb-item { width: 18.500px; height: 12px; flex: none; display: flex; align-items: center; justify-content: center; }
.tb-item svg { width: 9px; height: 9px; }
.tb-start { width: 15px; background: #5a4a26; }
.tb-dark { background: #5a4a26; }
.tb-dark + .tb-dark { width: 14.500px; }
.tb-word { background: linear-gradient(#58575a 35%, #c5b48c 35%); }
.tb-r { width: 9px; height: 9px; background: #eef2f8; color: #1f5fa8; font: bold 8px/9px "Liberation Sans", sans-serif; text-align: center; }
.tb-red { color: #c62d2d; }
.tb-teal { color: #137a9c; }
.tb-p { width: 9px; height: 9px; background: #d9412b; color: #fff; font: bold 7px/9px "Liberation Sans", sans-serif; text-align: center; }
.tb-fill { flex: 1; }
.tb-tray { width: 48px; height: 12px; background: #5a4a26; }
```
